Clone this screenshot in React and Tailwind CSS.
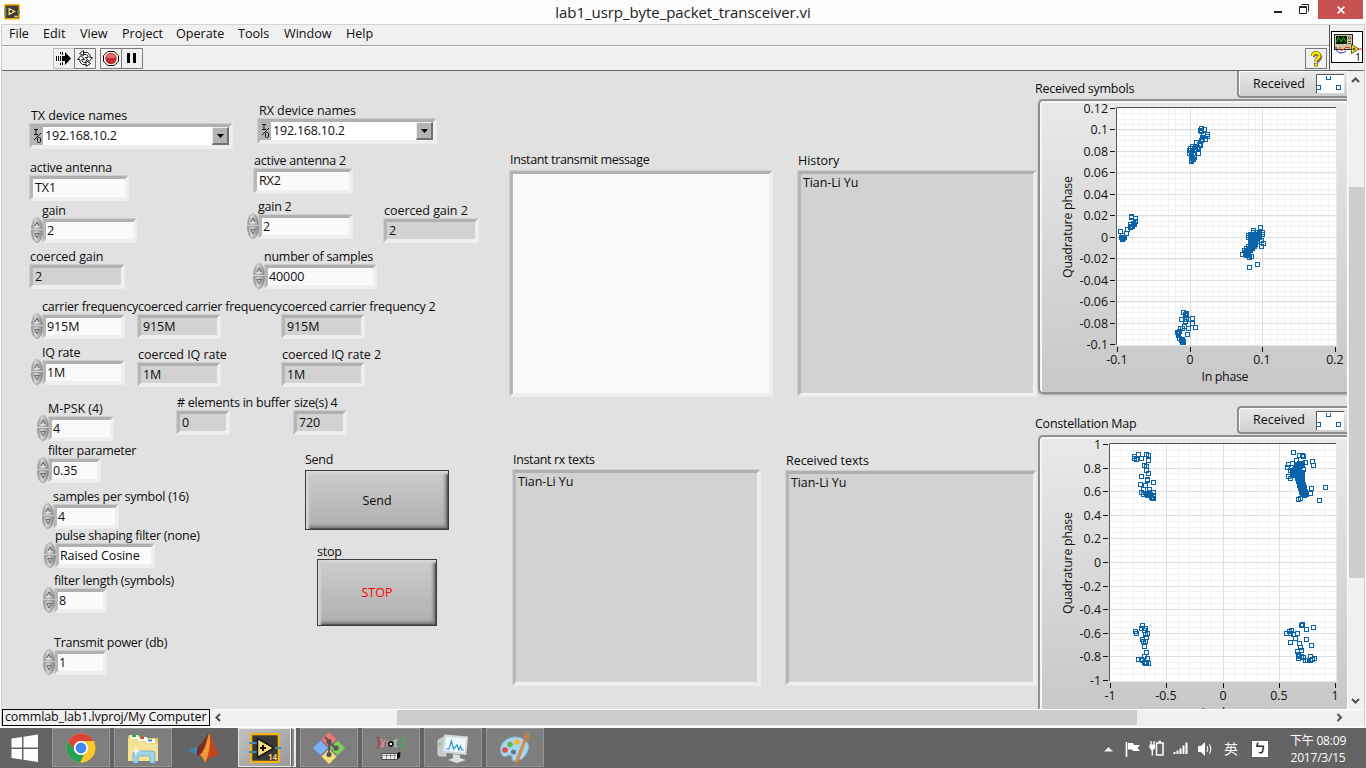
import React from "react";

const cx = (...a) => a.filter(Boolean).join(" ");

/* ---------- front panel controls ---------- */

function Bevel({ className, inner, children }) {
  return (
    <div className={cx("flex shrink-0 border border-t-[#cecece] border-l-[#cecece] border-r-[#ececec] border-b-[#ececec]", className)}>
      <div className={cx("flex min-w-0 flex-1 border-[3px] border-t-[#b0b0b0] border-l-[#b6b6b6] border-r-[#efefef] border-b-[#efefef]", inner)}>
        {children}
      </div>
    </div>
  );
}

function Spinner() {
  return (
    <svg width="13" height="26" viewBox="-1 0 13 26" className="z-10 -mt-px -mr-px shrink-0">
      <defs>
        <linearGradient id="knob" x1="0" x2="1" y1="0" y2="0">
          <stop offset="0" stopColor="#969696" />
          <stop offset=".4" stopColor="#d8d8d8" />
          <stop offset="1" stopColor="#858585" />
        </linearGradient>
      </defs>
      <path d="M0.5 12 C0.5 5 3 .7 6 .7 S11.5 5 11.5 12Z" fill="url(#knob)" stroke="#a0a0a0" strokeWidth=".6" />
      <path d="M0.5 13.6 C0.5 21 3 25.3 6 25.3 S11.5 21 11.5 13.6Z" fill="url(#knob)" stroke="#808080" strokeWidth=".6" />
      <path d="M3.8 9 L6 5 L8.3 9" fill="none" stroke="#5c5c5c" />
      <path d="M3.8 9.4H8.6" stroke="#eee" strokeWidth=".8" />
      <path d="M8.3 16.5 L6 21 L3.8 16.5 Z" fill="#c8c8c8" stroke="#626262" strokeWidth=".9" />
    </svg>
  );
}

function Label({ children, className, wide }) {
  return <div className={cx("h-4 leading-[17px] whitespace-nowrap", wide ? "tracking-[-0.05px]" : "tracking-[-0.25px]", className)}>{children}</div>;
}

function Field({ label, value, spin, readOnly, wide, className, box = "w-[100px] h-[25px]" }) {
  return (
    <div className={cx("flex shrink-0 flex-col", className)}>
      <Label wide={wide} className={spin ? "ml-3" : "ml-px"}>{label}</Label>
      <div className="flex">
        {spin && <Spinner />}
        <Bevel className={box} inner={cx("items-center", spin ? "pl-px" : "pl-0.5", readOnly ? "bg-[#d2d2d2]" : "bg-[#fafafa]")}>
          <span className="leading-4 tracking-[-0.1px] whitespace-nowrap">{value}</span>
        </Bevel>
      </div>
    </div>
  );
}

function DeviceField({ label, value, className, width }) {
  return (
    <div className={cx("flex shrink-0 flex-col", className)}>
      <Label wide className="ml-[2px]">{label}</Label>
      <Bevel className={cx("h-[26px]", width)} inner="bg-white">
        <svg width="10" height="18" viewBox="0 0 10 18" className="shrink-0 bg-[#b4b4b4]">
          <path d="M1 2.5H5 M3 2.5V7.5 M1 7.5H5 M1 13L8 6" stroke="#111" fill="none" />
          <rect x="4.5" y="10.5" width="3" height="5" rx="1" fill="none" stroke="#111" />
        </svg>
        <span className="flex-1 pl-[2px] leading-[18px] tracking-[-0.2px]">{value}</span>
        <div className="flex h-[18px] w-[17px] items-center justify-center border border-t-[#eee] border-l-[#eee] border-r-2 border-b-2 border-r-[#707070] border-b-[#707070] bg-[#b4b4b4]">
          <svg width="7" height="4" viewBox="0 0 7 4"><path d="M0 0H7L3.5 4Z" fill="#000" /></svg>
        </div>
      </Bevel>
    </div>
  );
}

function PushButton({ className, text }) {
  return (
    <div className={cx("shrink-0 border border-[#3c3c3c]", className)}>
      <div className="flex h-full items-center justify-center bg-linear-to-b from-[#cdcdcd] via-[#bfbfbf] via-45% to-[#afafaf] pt-0.5 shadow-[inset_1px_1px_0_#dadada,inset_3px_3px_2px_#d2d2d2,inset_-1px_-1px_1px_#555,inset_-3px_-3px_3px_#7d7d7d]">
        {text}
      </div>
    </div>
  );
}

function TextBox({ label, text, className, box, white, tight = true }) {
  return (
    <div className={cx("flex shrink-0 flex-col", className)}>
      <div className={cx("ml-px h-4 leading-4 whitespace-nowrap", tight ? "tracking-[-0.35px]" : "tracking-[-0.05px]")}>{label}</div>
      <Bevel className={box} inner={cx("pl-0.5", white ? "bg-[#fafafa]" : "bg-[#d2d2d2]")}>
        <span className="pt-px leading-4 tracking-[-0.1px]">{text}</span>
      </Bevel>
    </div>
  );
}

function Controls() {
  return (
    <section className="flex w-[506px] shrink-0 flex-col">
      <div className="flex h-[227px]">
        <div className="flex w-[217px] flex-col pt-9 pl-[27px]">
          <DeviceField label="TX device names" value="192.168.10.2" width="w-[204px]" />
          <Field className="mt-2.5" label="active antenna" value="TX1" box="w-[100px] h-[26px]" />
          <Field className="mt-px ml-px" spin label="gain" value="2" box="w-[95px] h-[25px]" />
          <Field className="mt-[5px]" readOnly wide label="coerced gain" value="2" box="w-[96px] h-[25px]" />
        </div>
        <div className="flex flex-col pt-[31px] pl-[27px]">
          <DeviceField className="ml-[11px]" label="RX device names" value="192.168.10.2" width="w-[180px]" />
          <Field className="mt-2 ml-[7px]" label="active antenna 2" value="RX2" box="w-[100px] h-[26px]" />
          <div className="mt-1 flex h-[46px]">
            <Field spin label="gain 2" value="2" box="w-[95px] h-[25px]" />
            <Field className="mt-1 ml-[30px]" readOnly wide label="coerced gain 2" value="2" box="w-[96px] h-[25px]" />
          </div>
          <Field className="mt-1 ml-1.5" spin label="number of samples" value="40000" box="w-[113px] h-[25px]" />
        </div>
      </div>
      <div className="flex h-[46px] pl-7">
        <Field className="w-[107px]" spin label="carrier frequency" value="915M" box="w-[83px] h-[25px]" />
        <Field className="w-36" readOnly label="coerced carrier frequency" value="915M" box="w-[84px] h-[25px]" />
        <Field readOnly label="coerced carrier frequency 2" value="915M" box="w-[84px] h-[25px]" />
      </div>
      <div className="flex h-[44px] pl-7">
        <Field className="w-[107px]" spin label="IQ rate" value="1M" box="w-[83px] h-[25px]" />
        <Field className="mt-0.5 w-36" readOnly wide label="coerced IQ rate" value="1M" box="w-[84px] h-[25px]" />
        <Field className="mt-0.5" readOnly wide label="coerced IQ rate 2" value="1M" box="w-[84px] h-[25px]" />
      </div>
      <div className="flex">
        <div className="flex w-[174px] flex-col pt-3 pl-[34px]">
          <Field wide spin label="M-PSK (4)" value="4" box="w-[66px] h-[25px]" />
          <Field className="mt-px" spin label="filter parameter" value="0.35" box="w-[53px] h-[25px]" />
          <Field className="mt-[5px] ml-[5px]" spin label="samples per symbol (16)" value="4" box="w-[66px] h-[25px]" />
          <Field className="-mt-0.5 ml-[7px]" spin label="pulse shaping filter (none)" value="Raised Cosine" box="w-[100px] h-[25px]" />
          <Field className="mt-1 ml-1.5" spin label="filter length (symbols)" value="8" box="w-[53px] h-[25px]" />
          <Field className="mt-[21px] ml-1.5" spin label="Transmit power (db)" value="1" box="w-[53px] h-[25px]" />
        </div>
        <div className="flex flex-col pt-1.5">
          <div className="flex">
            <Field className="w-[117px]" readOnly label="# elements in buffer" value="0" box="w-[54px] h-[25px]" />
            <Field readOnly label="size(s) 4" value="720" box="w-[54px] h-[25px]" />
          </div>
          <Label className="mt-4 ml-[129px]">Send</Label>
          <PushButton className="mt-[3px] ml-[129px] h-[60px] w-36" text="Send" />
          <Label className="mt-[13px] ml-[141px]">stop</Label>
          <PushButton className="ml-[141px] h-[67px] w-[120px]" text={<span className="text-[#ff0000]">STOP</span>} />
        </div>
      </div>
    </section>
  );
}

/* ---------- graphs ---------- */

const symbols = [
  // top cluster
  [1201.5, 128.5], [1204.5, 129.5], [1201.5, 131.5], [1203.5, 134.5], [1207.5, 134.5], [1207.5, 136.5], [1205.5, 139.5], [1202.5, 139.5],
  [1201.5, 140.5], [1196.5, 142.5], [1199.5, 144.5], [1192.5, 146.5], [1197.5, 147.5], [1189.5, 150.5], [1194.5, 149.5], [1198.5, 153.5],
  [1200.5, 130.5], [1202.5, 137.5], [1200.5, 145.5], [1198.5, 148.5], [1195.5, 147.5], [1190.5, 148.5], [1192.5, 150.5],
  [1189.5, 153.5], [1193.5, 153.5], [1191.5, 155.5], [1194.5, 157.5], [1193.5, 159.5], [1191.5, 160.5], [1191.5, 161.5], [1191.5, 152.5], [1192.5, 158.5],
  // left cluster
  [1131.5, 216.5], [1135.5, 218.5], [1135.5, 221.5], [1133.5, 223.5], [1132.5, 226.5], [1130.5, 224.5], [1130.5, 227.5], [1127.5, 229.5],
  [1120.5, 231.5], [1126.5, 233.5], [1122.5, 235.5], [1124.5, 237.5], [1122.5, 237.5], [1122.5, 239.5], [1121.5, 237.5], [1131.5, 217.5], [1134.5, 224.5], [1131.5, 226.5], [1123.5, 238.5],
  // right cluster
  [1260.5, 227.5], [1253.5, 230.5], [1253.5, 232.5], [1248.5, 235.5], [1256.5, 232.5], [1262.5, 232.5], [1262.5, 234.5], [1261.5, 240.5],
  [1263.5, 243.5], [1261.5, 246.5], [1254.5, 243.5], [1242.5, 254.5], [1245.5, 254.5], [1247.5, 255.5], [1249.5, 257.5], [1251.5, 256.5],
  [1257.5, 264.5], [1249.5, 267.5], [1248.5, 237.5],
  ...Array.from({ length: 60 }, (_, i) => [Math.round(1246 + (i / 60) * 12 + ((i * 7) % 5) - 2) + 0.5, Math.round(253 - (i / 60) * 19 + ((i * 5) % 7) - 3) + 0.5]),
  ...Array.from({ length: 16 }, (_, i) => [1250.5 + ((i * 3) % 8), 234.5 + ((i * 5) % 9)]),
  // bottom cluster
  [1183.5, 312.5], [1186.5, 313.5], [1181.5, 319.5], [1186.5, 315.5], [1186.5, 319.5], [1188.5, 319.5], [1192.5, 318.5], [1192.5, 323.5],
  [1195.5, 327.5], [1185.5, 321.5], [1188.5, 328.5], [1184.5, 326.5], [1180.5, 328.5], [1182.5, 328.5], [1177.5, 332.5], [1179.5, 331.5],
  [1178.5, 335.5], [1187.5, 334.5], [1179.5, 338.5], [1182.5, 339.5], [1182.5, 342.5], [1183.5, 342.5], [1181.5, 340.5], [1185.5, 314.5], [1178.5, 333.5], [1183.5, 341.5],
];

const constellation = [
  // top left
  [1134.5, 456.5], [1138.5, 454.5], [1134.5, 458.5], [1136.5, 459.5], [1141.5, 458.5], [1146.5, 454.5], [1148.5, 455.5], [1148.5, 460.5],
  [1144.5, 465.5], [1146.5, 466.5], [1146.5, 470.5], [1148.5, 473.5], [1141.5, 476.5], [1147.5, 480.5], [1147.5, 479.5], [1153.5, 482.5],
  [1140.5, 484.5], [1145.5, 485.5], [1143.5, 489.5], [1149.5, 489.5], [1141.5, 492.5], [1143.5, 494.5], [1146.5, 494.5], [1149.5, 494.5],
  [1153.5, 492.5], [1153.5, 495.5], [1151.5, 497.5], [1153.5, 498.5], [1148.5, 493.5], [1150.5, 494.5], [1147.5, 495.5], [1152.5, 498.5], [1149.5, 492.5],
  // top right
  [1293.5, 452.5], [1299.5, 455.5], [1302.5, 455.5], [1303.5, 456.5], [1312.5, 461.5], [1305.5, 462.5], [1313.5, 465.5], [1288.5, 464.5],
  [1287.5, 467.5], [1288.5, 476.5], [1290.5, 478.5], [1290.5, 470.5], [1325.5, 487.5], [1311.5, 488.5], [1310.5, 493.5], [1319.5, 500.5],
  [1298.5, 499.5], [1300.5, 498.5], [1304.5, 495.5], [1304.5, 493.5], [1302.5, 494.5], [1303.5, 469.5], [1296.5, 460.5],
  ...Array.from({ length: 60 }, (_, i) => [1292.5 + ((i * 5) % 11), 463.5 + ((i * 7) % 13)]),
  ...Array.from({ length: 60 }, (_, i) => [Math.round(1297 + (i / 60) * 6 + ((i * 3) % 5) - 1) + 0.5, Math.round(474 + (i / 60) * 21) + 0.5]),
  // bottom left
  [1142.5, 625.5], [1141.5, 628.5], [1145.5, 628.5], [1135.5, 631.5], [1136.5, 633.5], [1144.5, 630.5], [1145.5, 634.5], [1147.5, 633.5],
  [1146.5, 637.5], [1142.5, 639.5], [1143.5, 641.5], [1145.5, 641.5], [1144.5, 646.5], [1146.5, 652.5], [1144.5, 656.5], [1138.5, 659.5],
  [1141.5, 659.5], [1142.5, 660.5], [1147.5, 658.5], [1144.5, 662.5], [1146.5, 663.5], [1148.5, 663.5], [1145.5, 663.5],
  // bottom right
  [1301.5, 625.5], [1302.5, 624.5], [1313.5, 627.5], [1306.5, 629.5], [1291.5, 630.5], [1289.5, 631.5], [1286.5, 633.5], [1290.5, 633.5],
  [1297.5, 633.5], [1293.5, 634.5], [1295.5, 638.5], [1306.5, 639.5], [1290.5, 642.5], [1299.5, 643.5], [1311.5, 645.5], [1300.5, 647.5],
  [1301.5, 650.5], [1297.5, 651.5], [1298.5, 654.5], [1298.5, 658.5], [1301.5, 656.5], [1303.5, 657.5], [1305.5, 660.5], [1310.5, 656.5],
  [1314.5, 658.5], [1312.5, 659.5], [1310.5, 660.5], [1307.5, 660.5], [1299.5, 656.5], [1298.5, 655.5],
];

function Graph({ view, plot, xMajor, xStep, yMajor, yStep, xLabels, yLabels, points, axisY, phaseY, titleY }) {
  const [l, t, r, b] = plot;
  const lines = (from, to, step) => {
    const out = [];
    for (let v = from; v < to; v += step) out.push(Math.round(v) + 0.5);
    return out;
  };
  return (
    <svg width={view[2]} height={view[3]} viewBox={view.join(" ")} className="shrink-0" fontSize="12.4">
      <rect x={l} y={t} width={r - l} height={b - t} fill="#fff" />
      <g stroke="#f1f1f1" shapeRendering="crispEdges">
        {lines(l + 1 + xStep, r - 2, xStep).map((x) => <path key={x} d={`M${x} ${t}V${b}`} />)}
        {lines(t + 1 + yStep, b - 2, yStep).map((y) => <path key={y} d={`M${l} ${y}H${r}`} />)}
      </g>
      <g stroke="#dedede" shapeRendering="crispEdges">
        {xMajor.slice(1, -1).map((x) => <path key={x} d={`M${x} ${t}V${b}`} />)}
        {yMajor.slice(1, -1).map((y) => <path key={y} d={`M${l} ${y}H${r}`} />)}
      </g>
      <path d={`M${r + 0.5} ${t}V${b + 0.5}H${l}`} fill="none" stroke="#e6e6e6" />
      <path d={`M${l + 0.5} ${b}V${t + 0.5}H${r}`} fill="none" stroke="#555" />
      <g stroke="#111" shapeRendering="crispEdges">
        {xMajor.map((x) => <path key={x} d={`M${x} ${b + 2}V${b + 7}`} />)}
        {yMajor.map((y) => <path key={y} d={`M${l - 6} ${y}H${l - 1}`} />)}
      </g>
      <g fill="none" stroke="#0a63a8" shapeRendering="crispEdges">
        {points.map(([x, y], i) => <rect key={i} x={x - 2} y={y - 2} width="4" height="4" />)}
      </g>
      <g fill="#111">
        {yLabels.map((s, i) => <text key={s} x={l - 8} y={yMajor[i] + 4.5} textAnchor="end">{s}</text>)}
        {xLabels.map((s, i) => <text key={s} x={xMajor[i] - 0.5} y={axisY} textAnchor="middle">{s}</text>)}
        <text transform={`translate(1072 ${phaseY}) rotate(-90)`} textAnchor="middle" textLength="102">Quadrature phase</text>
        <text x="1225" y={titleY} textAnchor="middle" textLength="47">In phase</text>
      </g>
    </svg>
  );
}

function GraphPanel({ children, className, open }) {
  return (
    <div className={cx("ml-[3px] shrink-0 overflow-hidden rounded-tl-[5px] border-t-2 border-l-2 border-[#909090] bg-linear-to-b from-[#e9e9e9] to-[#c8c8c8]", open ? "shadow-[inset_1px_1px_0_1px_#f6f6f6]" : "rounded-bl-[5px] border-b-2 shadow-[inset_1px_1px_0_1px_#f6f6f6,0_1px_2px_#aaa]", className)}>
      <div className="-mt-0.5 -ml-0.5">{children}</div>
    </div>
  );
}

function Legend({ className }) {
  return (
    <div className={cx("flex w-[110px] shrink-0 items-center rounded-l-[4px] border-b-2 border-l-2 border-[#8d8d8d] bg-linear-to-b from-[#e8e8e8] to-[#cfcfcf] pl-3.5 shadow-[inset_1px_1px_0_#fff]", className)}>
      <span className="w-[63px] leading-4">Received</span>
      <svg width="28" height="19" viewBox="0 0 28 19">
        <rect width="28" height="19" fill="#fff" />
        <path d="M.5 19V.5H28" fill="none" stroke="#555" />
        <path d="M10.500 2V5.500H14.500V2 M1 11.500H4.500V15.500H1 M20.500 11.500H24.500V15.500H20.500Z" fill="none" stroke="#0a63a8" shapeRendering="crispEdges" />
      </svg>
    </div>
  );
}

function Graphs() {
  const y1 = ["0.12", "0.1", "0.08", "0.06", "0.04", "0.02", "0", "-0.02", "-0.04", "-0.06", "-0.08", "-0.1"];
  const y2 = ["1", "0.8", "0.6", "0.4", "0.2", "0", "-0.2", "-0.4", "-0.6", "-0.8", "-1"];
  return (
    <section className="flex w-[312px] shrink-0 flex-col overflow-hidden">
      <div className="flex h-7 items-start justify-between">
        <Label className="mt-[9px] tracking-[-0.15px]">Received symbols</Label>
        <Legend className="h-[27px] rounded-tl-none" />
      </div>
      <GraphPanel className="h-[295px]">
        <Graph
          view={[1038, 99, 309, 294]} plot={[1116, 107, 1336, 345]} points={symbols}
          xMajor={[1117.5, 1190.5, 1262.5, 1335.5]} xStep={7.27} xLabels={["-0.1", "0", "0.1", "0.2"]}
          yMajor={y1.map((_, i) => Math.round(107.7 + i * 21.5) + 0.5)} yStep={5.38} yLabels={y1}
          axisY={363.5} phaseY={227} titleY={381}
        />
      </GraphPanel>
      <div className="mt-3 flex h-[29px] items-start justify-between">
        <Label className="mt-[9px] tracking-[-0.2px]">Constellation Map</Label>
        <Legend className="h-[28px] border-t-2" />
      </div>
      <GraphPanel className="h-[274px]" open>
        <Graph
          view={[1038, 435, 309, 274]} plot={[1109, 443, 1336, 681]} points={constellation}
          xMajor={[1110.5, 1166.5, 1223.5, 1279.5, 1335.5]} xStep={11.27} xLabels={["-1", "-0.5", "0", "0.5", "1"]}
          yMajor={y2.map((_, i) => Math.round(444 + i * 23.6) + 0.5)} yStep={5.9} yLabels={y2}
          axisY={699.5} phaseY={563} titleY={717}
        />
      </GraphPanel>
    </section>
  );
}

/* ---------- window chrome ---------- */

function TitleBar() {
  return (
    <header className="flex h-6 shrink-0 items-start justify-between bg-[#fcfcfc]">
      <svg width="92" height="20" viewBox="0 -4 92 20" className="ml-1">
        <rect x=".8" y=".8" width="14.400" height="14" fill="#3b3b3b" stroke="#f2b50c" strokeWidth="1.500" />
        <path d="M0 5H3 M0 10H3 M13 8H16" stroke="#4a8ab0" strokeWidth="1.500" />
        <path d="M4.500 3.500V11.500L12 7.500Z" fill="#f6d980" />
        <path d="M5.500 7.500H8.500 M7 6V9" stroke="#111" />
        <path d="M10 12.500H14" stroke="#e8c870" strokeWidth="1.500" />
      </svg>
      <h1 className="flex-1 text-center text-[15px] leading-6 text-[#222]"><span className="tracking-[-0.06px]">lab1_usrp_byte_packet_transceiver.vi</span></h1>
      <div className="flex">
        <svg width="48" height="19" viewBox="-4 0 48 19">
          <path d="M0 12H8" stroke="#222" strokeWidth="2" />
          <path d="M25.500 6.500H32.500V13.500H25.500Z M25.500 7.500H32" fill="none" stroke="#222" />
          <path d="M27.500 4.500H34.500V11.500" fill="none" stroke="#222" />
        </svg>
        <div className="mr-[3px] flex h-[19px] w-[45px] items-center justify-center bg-[#c75050]">
          <svg width="8" height="8" viewBox="0 0 8 8"><path d="M.7.7L7.300 7.300M7.300.7L.7 7.300" stroke="#fff" strokeWidth="1.700" /></svg>
        </div>
      </div>
    </header>
  );
}

const menus = [["File", "w-[34px]"], ["Edit", "w-[37px]"], ["View", "w-[42px]"], ["Project", "w-[54px]"], ["Operate", "w-[62px]"], ["Tools", "w-[46px]"], ["Window", "w-[62px]"], ["Help", "w-10"]];

function Toolbars() {
  return (
    <div className="flex h-[47px] shrink-0 border-t border-[#d4d4d4] border-b border-b-[#666] bg-[#f0f0f0]">
      <div className="flex flex-1 flex-col border-r border-[#555]">
        <nav className="flex h-[21px] items-start border-b border-[#a0a0a0] pl-[7px] text-[12.6px] leading-[18px]">
          {menus.map(([m, w]) => <span key={m} className={w}>{m}</span>)}
        </nav>
        <div className="flex flex-1 items-start border-t border-white pt-px pl-[51px]">
          <svg width="90" height="21" viewBox="0 0 90 21" className="shrink-0">
            <path d="M21 .5H.5V20.500H21" fill="none" stroke="#bdbdbd" />
            <path d="M21.500.5H42.500V20.500H21.500Z M47.500.5H89.500V20.500H47.500Z M68.500.5V20.500" fill="none" stroke="#7a7a7a" />
            <path d="M3.500 8V13M5.500 8V13M7.500 8V13" stroke="#000" />
            <path d="M9 8H12V4L18 10.500L12 17V13H9Z" fill="#000" />
            <path d="M7.500 4V6M9.500 4V7M7.500 15V17M9.500 14V17" stroke="#000" />
            <path d="M30.500 4.500H34.500L37 7V9.500H39.500L36 13.500L32.500 9.500H35V8L33.500 6.500H29.500Z" fill="#fff" stroke="#000" strokeWidth=".9" strokeLinejoin="round" />
            <path d="M33.500 16.500H29.500L27 14V11.500H24.500L28 7.500L31.500 11.500H29V13L30.500 14.500H34.500Z" fill="#fff" stroke="#000" strokeWidth=".9" strokeLinejoin="round" />
            <path d="M33 12.500L37.500 15.500L33 18.500Z M30.500 2.500L26.500 5.500L30.500 7.500Z" fill="#fff" stroke="#000" strokeWidth=".9" />
            <path d="M54.800 3.500H61.200L65.500 7.800V13.200L61.200 17.500H54.800L50.500 13.200V7.800Z" fill="#fff" stroke="#000" />
            <circle cx="58" cy="10.500" r="5.700" fill="#c02c2c" />
            <path d="M53.500 10 A4.500 4.500 0 0 1 62.500 10Z" fill="#d97070" />
            <path d="M74 5H77V15H74Z M80 5H83V15H80Z" fill="#000" />
          </svg>
          <div className="flex-1" />
          <div className="mr-0.5 flex h-[21px] w-[22px] items-center justify-center border border-[#7a7a7a]">
            <svg width="14" height="16" viewBox="0 0 14 16">
              <path d="M4 5.500C4 1.500 11.500 2 11 5.500C10.500 8.500 8 7.500 8 11" fill="none" stroke="#777" strokeWidth="2.500" transform="translate(1 .8)" />
              <path d="M3.500 5C3.500 .8 11 1 10.500 5C10 8 7 7.500 7 10.500" fill="none" stroke="#6b6400" strokeWidth="3.600" />
              <path d="M3.500 5C3.500 .8 11 1 10.500 5C10 8 7 7.500 7 10.300" fill="none" stroke="#ffee00" strokeWidth="2.200" />
              <rect x="5.500" y="12.300" width="3" height="2.700" fill="#ffee00" stroke="#6b6400" strokeWidth=".7" />
            </svg>
          </div>
        </div>
      </div>
      <svg width="34" height="45" viewBox="0 0 34 45" className="shrink-0">
        <rect x="1.500" y="6.500" width="31" height="31" fill="#fff" stroke="#000" />
        <rect x="4.500" y="9.500" width="18" height="15" fill="#cfc9a0" stroke="#222" />
        <rect x="6" y="11" width="11" height="8" fill="#0a1a0a" />
        <path d="M6.500 17L8.500 12.500L11 17L13.500 12.500L16 17" fill="none" stroke="#16c516" />
        <circle cx="19.500" cy="13" r="1.200" fill="none" stroke="#333" strokeWidth=".7" />
        <path d="M18 16.500H21 M18 18.500H21" stroke="#333" strokeWidth=".8" />
        <path d="M6 22C6 29 13 29 16 26" fill="none" stroke="#1a1ab0" />
        <path d="M10 22V25H13L16 22L20 23M26 24H32" fill="none" stroke="#e02020" />
        <path d="M21.500 19.500V28.500L29 24Z" fill="#ffee20" stroke="#333" strokeWidth=".8" />
        <path d="M22.500 24H25.500 M24 22.500V25.500" stroke="#000" strokeWidth=".8" />
        <text x="25" y="36" fontSize="10.500" fill="#000">1</text>
      </svg>
    </div>
  );
}

/* ---------- taskbar ---------- */

const Svg = ({ children }) => <svg width="32" height="32" viewBox="0 0 32 32">{children}</svg>;

const ChromeIcon = () => (
  <Svg>
    <circle cx="16" cy="16" r="14.500" fill="#fbcb2c" />
    <path d="M16 1.500A14.500 14.500 0 0 1 28.700 9H16A7 7 0 0 0 9.500 19L3.300 9A14.500 14.500 0 0 1 16 1.500Z" fill="#dc4437" />
    <path d="M3.300 9L10 19.500A7 7 0 0 0 19 22.400L15 30.500A14.500 14.500 0 0 1 3.300 9Z" fill="#28a05a" />
    <circle cx="16" cy="16" r="7" fill="#fff" />
    <circle cx="16" cy="16" r="5.400" fill="#4088f0" />
  </Svg>
);
const FolderIcon = () => (
  <Svg>
    <path d="M1 3.500H12L14 6H31V29H1Z" fill="#e5c766" />
    <path d="M3 3H11V7H3Z" fill="#f7f7ee" /><path d="M5 3H9V5H5Z" fill="#25b03a" />
    <path d="M11 5H20V9H11Z" fill="#fff" /><path d="M13 5H17V7H13Z" fill="#e0482a" />
    <path d="M19 7H28V11H19Z" fill="#fff" /><path d="M21 7.500H25V9.500H21Z" fill="#2a8de0" />
    <path d="M1 7H9L11 9.500H19L21 11.500H31V29H1Z" fill="#f6e294" />
    <path d="M6 31V22Q6 19 9 19H25Q28 19 28 22V31H23V24H11V31Z" fill="#9ed4ea" stroke="#6eaccb" strokeWidth=".8" />
    <path d="M9 13L10 18L14 19L10 20L9 24L8 20L4 19L8 18Z" fill="#fff" opacity=".85" />
  </Svg>
);
const MatlabIcon = () => (
  <Svg>
    <path d="M0 18L9 14L13 18L8 23Z" fill="#3f83b4" />
    <path d="M9 14C14 12 16 5 20 1C17 9 15 19 10 24L7.500 22Z" fill="#7a2b1e" />
    <path d="M20 1C24 7 26 17 31 25C26 21 23 24 16 31C15 27 13 24 10 23C16 19 17 8 20 1Z" fill="#c9431c" />
    <path d="M20 1C22 8 21 20 16 31C15 27 13 24 11 23C17 18 18 8 20 1Z" fill="#f0993a" />
  </Svg>
);
const LabviewIcon = () => (
  <Svg>
    <rect x="2.200" y="2.200" width="27.600" height="27.600" fill="#383838" stroke="#f2b50c" strokeWidth="2.200" />
    <path d="M0 11H8M0 20H8M25 16H32" stroke="#3c8cb8" strokeWidth="2" />
    <path d="M8.500 6.500V25.500L25 16Z" fill="#f8dc82" stroke="#171717" strokeWidth="1.500" />
    <path d="M11 16H17 M14 13V19" stroke="#111" strokeWidth="2" />
    <text x="19" y="28" fontSize="8" fontWeight="700" fill="#f4d070">14</text>
  </Svg>
);
const GitIcon = () => (
  <Svg>
    <path d="M16 0.500L23.500 8L16 15.500L8.500 8Z" fill="#f07470" stroke="#f07470" strokeLinejoin="round" />
    <path d="M8 8.500L15.500 16L8 23.500L.5 16Z" fill="#7eb0fa" stroke="#7eb0fa" strokeLinejoin="round" />
    <path d="M24 8.500L31.500 16L24 23.500L16.500 16Z" fill="#82cc5c" stroke="#82cc5c" strokeLinejoin="round" />
    <path d="M16 16.500L23.500 24L16 31.500L8.500 24Z" fill="#fbe07a" stroke="#fbe07a" strokeLinejoin="round" />
    <path d="M8 8L24 24 M24 8L8 24" stroke="#777" strokeWidth="1.400" />
    <path d="M12 5L16 9V22 M16 10.500L23 16" fill="none" stroke="#555" strokeWidth="1.800" />
    <circle cx="16" cy="9.500" r="2.600" fill="#555" /><circle cx="23" cy="16" r="2.600" fill="#555" /><circle cx="16" cy="22.500" r="2.600" fill="#555" />
  </Svg>
);
const RadioIcon = () => (
  <Svg>
    <g fill="none" strokeWidth="1.400" strokeDasharray="2.500 .7">
      <path d="M2 5Q6 11 2 17" stroke="#c02838" /><path d="M6 7Q9 11 6 16 M10 8Q7 11 9 15 M12 9Q14 11 12 14" stroke="#e89098" />
      <path d="M30 5Q26 11 30 17 M26 6Q29 11 26 16" stroke="#40b060" /><path d="M22 7Q19 11 22 16 M19 8Q21 11 19 15" stroke="#a0d8b0" />
    </g>
    <circle cx="15.800" cy="12" r="2" fill="#fff" stroke="#000" strokeWidth="1.500" />
    <path d="M7 21.500H22L25 20V25L22 27.500H7Z" fill="#f2f2f2" stroke="#333" strokeWidth=".8" />
    <path d="M8 23.500H21M11.500 21.500V27M15.500 21.500V27M19.500 21.500V27" stroke="#777" strokeWidth=".8" />
    <path d="M22 21.500L25 20V25L22 27.500Z" fill="#111" />
  </Svg>
);
const MonitorIcon = () => (
  <Svg>
    <path d="M1 8L9 4V24L3 24Q1 24 1 22Z" fill="#c4c8ca" stroke="#e4e6e8" strokeWidth=".7" />
    <path d="M8 3.500L30 5.500L28.500 22L6.500 19.500Z" fill="#eef8fc" stroke="#d4d8da" strokeWidth="2" />
    <path d="M9 17L12 17L14.500 9L16.500 17L20 13L22 18L23.500 14L25 18L27 18" fill="none" stroke="#3294c8" strokeWidth="1.200" />
    <path d="M16 22L23 23L23 26L29 28L20 31L11 28L16 26Z" fill="#dcdfe0" />
    <path d="M3 11V13" stroke="#59cf45" strokeWidth="2" />
  </Svg>
);
const PaintIcon = () => (
  <Svg>
    <path d="M2 21C-1 13 7 5 16 5C25 5 32 11 29 18C26 27 20 29 14 29C12 26 14 23 11 23C8 23 5 28 2 21Z" fill="#a9d5ee" stroke="#7eb2d2" />
    <circle cx="6" cy="18" r="2.800" fill="#d94f40" /><circle cx="11" cy="12.500" r="2.800" fill="#64b548" /><circle cx="18" cy="10" r="2.800" fill="#f4b838" />
    <circle cx="14.500" cy="20" r="2.500" fill="#677888" />
    <path d="M24.500 9L26.500 10L18 32L16 31Z" fill="#e79a3f" stroke="#b36820" strokeWidth=".6" />
    <path d="M24 8C23 3 26 1 29 0C32 4 31 8 27 10Z" fill="#b48356" />
  </Svg>
);

function Task({ children, kind = "open" }) {
  const look = {
    plain: "border-transparent",
    open: "border-[#969696] bg-[#7e7e7e]",
  }[kind];
  return <div className={cx("flex h-[39px] w-[58px] shrink-0 items-center justify-center border", look)}>{children}</div>;
}

function Taskbar() {
  return (
    <footer className="flex h-10 shrink-0 items-start bg-[#646464]">
      <svg width="52" height="40" viewBox="0 0 52 40" className="shrink-0">
        <path d="M11.500 10.500L22 9V19.500H11.500Z M23.500 8.800L38 6.500V19.500H23.500Z M11.500 21H22V31.500L11.500 30Z M23.500 21H38V34L23.500 31.700Z" fill="#fff" />
      </svg>
      <div className="flex gap-1">
        <Task><ChromeIcon /></Task>
        <Task><FolderIcon /></Task>
        <Task kind="plain"><MatlabIcon /></Task>
        <div className="flex w-[58px] gap-px">
          <div className="flex h-[39px] w-[53px] shrink-0 items-center justify-center border border-[#e8e8e8] bg-linear-to-br from-[#c2c2c2] to-[#999]"><LabviewIcon /></div>
          <div className="h-[39px] w-1 border-y border-r-2 border-[#e8e8e8] bg-[#888]" />
        </div>
        <Task><GitIcon /></Task>
        <Task><RadioIcon /></Task>
        <Task><MonitorIcon /></Task>
        <Task><PaintIcon /></Task>
      </div>
      <div className="flex-1" />
      <svg width="120" height="40" viewBox="1098 728 120 40" className="shrink-0">
        <path d="M1102 751.500H1111L1106.500 747Z" fill="#eee" />
        <path d="M1124.500 742V757" stroke="#fff" strokeWidth="1.600" />
        <path d="M1126 743H1131L1132 745H1138L1135.500 748L1138 751H1131L1130 749.500H1126Z" fill="#fff" />
        <path d="M1154.500 743H1161V755H1154.500Z M1156.500 741.500H1159" fill="none" stroke="#fff" strokeWidth="1.500" />
        <path d="M1149 741V745M1152 741V745" stroke="#fff" strokeWidth="1.300" />
        <path d="M1147.500 744.500H1153V748L1151 750.500H1149.500L1147.500 748Z" fill="#fff" />
        <path d="M1150.300 750V755.500" stroke="#fff" strokeWidth="1.500" />
        <path d="M1172.500 752V754M1175.500 750.500V754M1178.500 748.500V754M1181.500 745.500V754M1184.500 742.500V754" stroke="#fff" strokeWidth="2" />
        <path d="M1196 746H1199L1203 742V756L1199 752H1196Z" fill="#fff" />
        <path d="M1205 746Q1206.500 749 1205 752 M1207.500 744.500Q1210 749 1207.500 753.500" fill="none" stroke="#eee" strokeWidth="1.200" />
      </svg>
      <span className="ml-1 w-7 pt-px text-[14px] leading-[40px] text-white">英</span>
      <div className="mt-[13px] mr-[-1px] flex h-4 w-4 items-center justify-center bg-white text-[12px] leading-4 font-bold text-[#333]">ㄅ</div>
      <div className="ml-[17px] w-[69px] pt-1 pr-px text-center text-[12px] leading-[17px] tracking-[-0.2px] whitespace-nowrap text-white">
        <div>下午 08:09</div>
        <div>2017/3/15</div>
      </div>
      <div className="w-[13px] shrink-0" />
    </footer>
  );
}

export default function App() {
  return (
    <div className="flex h-[768px] w-[1366px] flex-col overflow-hidden bg-[#fcfcfc] font-['Open_Sans','Noto_Sans_CJK_TC',sans-serif] text-[12.5px] text-[#0d0d0d]">
      <TitleBar />
      <div className="mx-px flex h-[702px] shrink-0 flex-col border-x border-[#cfcfcf] bg-[#f0f0f0]">
        <Toolbars />
        <div className="flex h-[638px] shrink-0">
          <main className="flex w-[1345px] shrink-0 overflow-hidden bg-[#e1e1e1]">
            <Controls />
            <section className="flex w-[527px] shrink-0 flex-col">
              <div className="flex h-[298px] pt-[81px] pl-px">
                <TextBox label="Instant transmit message" box="mt-0.5 h-[227px] w-[264px]" white />
                <TextBox className="mt-px ml-6" label="History" tight={false} box="mt-px h-[227px] w-[240px]" text="Tian-Li Yu" />
              </div>
              <div className="flex pt-[83px] pl-1">
                <TextBox label="Instant rx texts" text="Tian-Li Yu" box="mt-px h-[217px] w-[249px]" />
                <TextBox className="mt-px ml-6" label="Received texts" tight={false} text="Tian-Li Yu" box="mt-px h-[216px] w-[252px]" />
              </div>
            </section>
            <Graphs />
          </main>
          <div className="flex flex-1 flex-col items-center border-l border-white">
            <svg width="16" height="116" viewBox="0 0 16 116" className="shrink-0"><path d="M4 11L7.500 7.500L11 11" fill="none" stroke="#505050" strokeWidth="2" /></svg>
            <div className="h-[391px] w-[15px] bg-[#cdcdcd]" />
            <div className="flex-1" />
            <svg width="16" height="16" viewBox="0 0 16 16" className="shrink-0"><path d="M4 6L7.500 9.500L11 6" fill="none" stroke="#505050" strokeWidth="2" /></svg>
          </div>
        </div>
        <div className="flex h-4 shrink-0 border-t border-white">
          <div className="-mt-px flex h-[17px] w-[208px] items-center border border-black pl-0.5 leading-none tracking-[-0.12px] whitespace-nowrap">commlab_lab1.lvproj/My Computer</div>
          <svg width="187" height="15" viewBox="0 0 187 15"><path d="M10 4L6.500 7.500L10 11" fill="none" stroke="#505050" strokeWidth="2" /></svg>
          <div className="h-[15px] w-[740px] bg-[#cdcdcd]" />
          <div className="flex-1" />
          <svg width="30" height="15" viewBox="0 0 30 15"><path d="M3.500 4L7 7.500L3.500 11" fill="none" stroke="#505050" strokeWidth="2" /></svg>
        </div>
      </div>
      <div className="h-0.5 shrink-0 bg-[#fcfcfc]" />
      <Taskbar />
    </div>
  );
}
